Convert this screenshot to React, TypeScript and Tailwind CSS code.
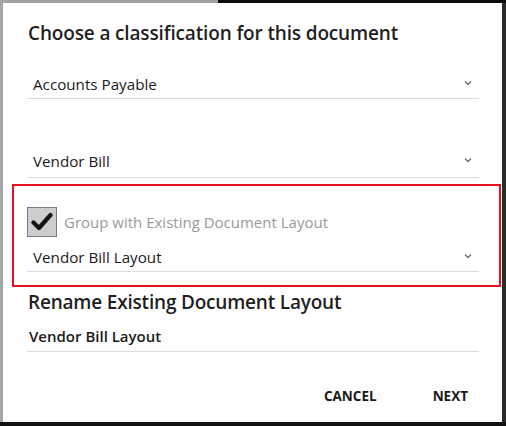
import React from "react";

const Chevron = () => (
  <svg width="8" height="6" viewBox="0 0 8 6" className="mb-[10px] mr-[7px] shrink-0">
    <path d="M1 1.5 L4 4.5 L7 1.5" fill="none" stroke="#6b6b6b" strokeWidth="1.4" />
  </svg>
);

const SelectField = ({ value, className }: { value: string; className: string }) => (
  <div className={`flex items-end justify-between border-b border-[#dcdcdc] ${className}`}>
    <span className="pl-[6px] text-[15.2px] leading-[24px] text-[#1b1b1b]">{value}</span>
    <Chevron />
  </div>
);

export default function App() {
  return (
    <div
      className="flex h-[426px] w-[506px] flex-col overflow-hidden bg-[#8f8f8f]"
      style={{ fontFamily: '"Open Sans", "Noto Sans", sans-serif' }}
    >
      <div className="flex h-[3px] shrink-0">
        <div className="w-[218px] bg-[#a3a3a3]" />
        <div className="flex-1 bg-[#0a0a0a]" />
      </div>
      <div className="flex h-[419px] shrink-0">
        <div className="w-[3px] bg-[#a6a6a6]" />
        <div className="flex w-[499px] flex-col bg-white pl-[24px] pr-[23px]">
          <div className="flex h-[60px] items-center pl-[1px]">
            <h1 className="text-[19px] font-semibold tracking-[-0.15px] text-[#1f1f1f]">
              Choose a classification for this document
            </h1>
          </div>

          <SelectField value="Accounts Payable" className="h-[36px] pb-[2px]" />
          <SelectField value="Vendor Bill" className="h-[79px] pb-[4px]" />

          <div className="ml-[-15px] mr-[-22px] mt-[6px] h-[103px] border-2 border-[#e1141e] pl-[13px] pr-[20px]">
            <div className="mt-[21px] flex items-center gap-[7px]">
              <div className="flex h-[30px] w-[30px] items-center justify-center border border-[#7a7a7a] bg-[#cdcdcd]">
                <svg width="22" height="20" viewBox="0 0 22 20">
                  <path
                    d="M2.5 10.5 L8 16 L19.5 3"
                    fill="none"
                    stroke="#141414"
                    strokeWidth="4.2"
                    strokeLinecap="round"
                    strokeLinejoin="round"
                  />
                </svg>
              </div>
              <span className="text-[15px] leading-[24px] text-[#9a9a9a]">
                Group with Existing Document Layout
              </span>
            </div>
            <SelectField value="Vendor Bill Layout" className="h-[35px] pb-[2px]" />
          </div>

          <div className="flex h-[30px] items-center pl-[1px]">
            <h2 className="text-[19px] font-semibold tracking-[-0.2px] text-[#1f1f1f]">
              Rename Existing Document Layout
            </h2>
          </div>

          <div className="flex h-[35px] items-end border-b border-[#dcdcdc] pb-[3px]">
            <span className="pl-[2px] text-[15px] font-semibold leading-[24px] text-[#1b1b1b]">
              Vendor Bill Layout
            </span>
          </div>

          <div className="flex flex-1 items-start justify-end pt-[34px]">
            <button className="mr-[56px] text-[13.5px] font-bold text-[#1b1b1b]">CANCEL</button>
            <button className="mr-[11px] text-[13.5px] font-bold text-[#1b1b1b]">NEXT</button>
          </div>
        </div>
        <div className="w-[4px] bg-[#2a2a2a]" />
      </div>
      <div className="h-[4px] shrink-0 bg-[#111]" />
    </div>
  );
}
